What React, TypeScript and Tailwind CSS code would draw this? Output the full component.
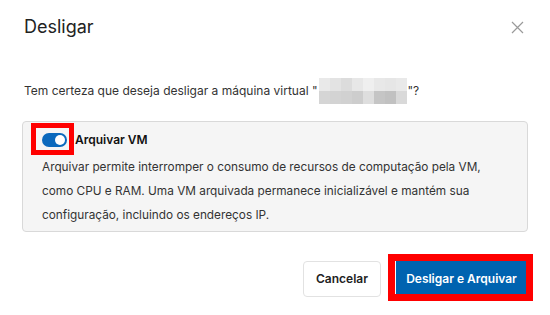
import React from 'react';

const blurTop = ['#e9e9e9', '#e3e3e3', '#dcdcdc', '#e7e7e7', '#efefef', '#e8e8e8', '#e6e6e6', '#e9e9e9'];
const blurBottom = ['#d5d5d5', '#d3d3d3', '#d1d1d1', '#cdcdcd', '#dedede', '#c5c5c5', '#c1c1c1', '#d9d9d9'];

function BlurredName() {
  return (
    <span className="mx-[1px] inline-flex flex-col">
      <span className="flex">
        {blurTop.map((c, i) => (
          <span key={i} className="h-[13px] w-[11px]" style={{ backgroundColor: c }} />
        ))}
      </span>
      <span className="flex">
        {blurBottom.map((c, i) => (
          <span key={i} className="h-[13px] w-[11px]" style={{ backgroundColor: c }} />
        ))}
      </span>
    </span>
  );
}

export default function App() {
  return (
    <div className="h-[315px] w-[550px] overflow-hidden bg-white font-['Inter',sans-serif] text-[#333]">
      <div className="flex h-[54px] items-center justify-between pl-6 pr-[26px]">
        <h1 className="text-[18px] leading-6 text-[#222]">Desligar</h1>
        <svg width="13" height="13" viewBox="0 0 13 13" className="text-[#9a9a9a]">
          <path d="M1 1 L12 12 M12 1 L1 12" stroke="currentColor" strokeWidth="1.2" fill="none" />
        </svg>
      </div>

      <div className="mt-[24px] flex h-[26px] items-center whitespace-pre pl-6 text-[12px]">
        <span>Tem certeza que deseja desligar a máquina virtual "</span>
        <BlurredName />
        <span>"?</span>
      </div>

      <div className="mx-[22px] mt-[17px] h-[111px] rounded border border-[#d9d9d9] bg-[#f5f5f5] pl-[19px] pr-4 pt-[11px]">
        <div className="flex h-[14px] items-center gap-2">
          <div className="relative">
            <div className="flex h-[14px] w-[25px] items-center justify-end rounded-full bg-[#0b69bd] pr-[2px]">
              <div className="h-[10px] w-[10px] rounded-full bg-white" />
            </div>
            <div className="absolute -bottom-[8px] -left-[11px] -right-[7px] -top-[10px] border-[5px] border-[#f00]" />
          </div>
          <span className="text-[12px] font-semibold text-[#111]">Arquivar VM</span>
        </div>
        <p className="mt-[8px] text-[11.8px] leading-6 text-[#333]">
          Arquivar permite interromper o consumo de recursos de computação pela VM,
          <br />
          como CPU e RAM. Uma VM arquivada permanece inicializável e mantém sua
          <br />
          configuração, incluindo os endereços IP.
        </p>
      </div>

      <div className="mt-[29px] flex items-start justify-end gap-[15px] pr-[23px]">
        <button className="h-9 w-[78px] rounded border border-[#e2e2e2] bg-white text-[12px] font-semibold text-[#222]">
          Cancelar
        </button>
        <div className="relative">
          <button className="h-[35px] w-[131px] bg-[#0063b0] text-[12px] font-semibold text-white">
            Desligar e Arquivar
          </button>
          <div className="absolute -bottom-[5px] -left-[8px] -right-[6px] -top-[7px] border-[7px] border-[#f00]" />
        </div>
      </div>
    </div>
  );
}
